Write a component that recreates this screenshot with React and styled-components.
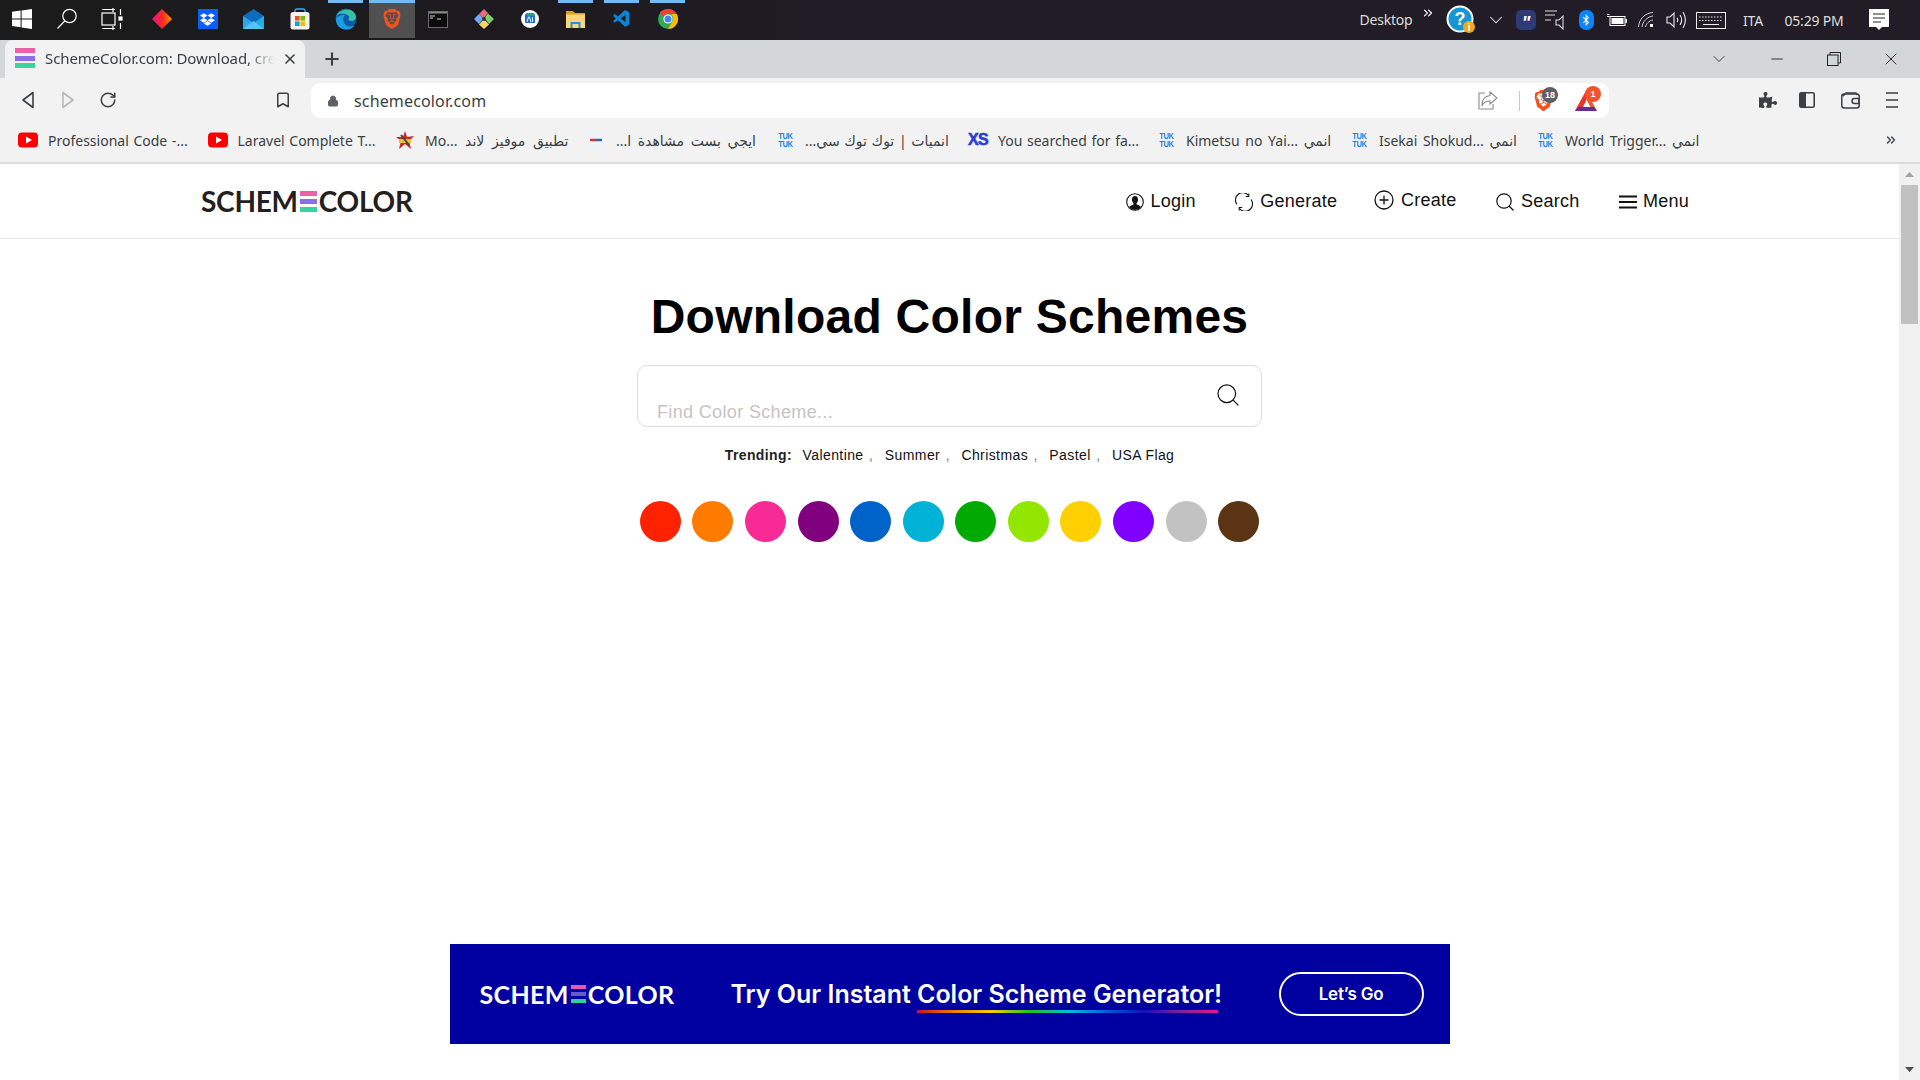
import React from 'react';
import styled, { createGlobalStyle } from 'styled-components';
import { FaDropbox, FaPuzzlePiece, FaBluetoothB } from 'react-icons/fa';
import { SiBrave } from 'react-icons/si';
import { VscVscode } from 'react-icons/vsc';
import { ChevronDown, Minus, X, Plus, Lock, Bookmark as BookmarkIcon, RotateCw, ChevronsRight } from 'lucide-react';

const Global = createGlobalStyle`
  html, body { margin: 0; padding: 0; height: 100%; overflow: hidden; background: #fff; }
  #root { height: 1080px; }
  * { box-sizing: border-box; }
  svg { flex: none; }
`;

const UI = `"Noto Sans", "DejaVu Sans", sans-serif`;
const WEB = `"Liberation Sans", Arial, sans-serif`;

const Screen = styled.div`display: flex; flex-direction: column; width: 1920px; height: 1080px; overflow: hidden;`;

/* Taskbar */
const Taskbar = styled.div`
  height: 40px; flex: none; display: flex; align-items: flex-start;
  background: linear-gradient(90deg, #1b1b1b 0%, #1c1a1e 25%, #211c25 45%, #211c25 100%);
  color: #e8e8e8; font-family: ${UI};
`;
const TaskLeft = styled.div`display: flex; margin-left: -1px;`;
const TaskGroup = styled.div`display: flex; margin-left: 4.5px;`;
const TaskCell = styled.div`
  position: relative; height: 38px; width: ${p => p.$w || 46}px; flex: none;
  display: flex; align-items: center; justify-content: center;
  background: ${p => (p.$active ? '#505050' : 'transparent')};
  &::before {
    content: ''; position: absolute; top: 0; height: 3px;
    left: ${p => (p.$active ? '0' : '5.5px')}; right: ${p => (p.$active ? '0' : '5.5px')};
    background: ${p => (p.$active || p.$run ? '#76b9ed' : 'transparent')};
  }
`;
const Tray = styled.div`display: flex; margin-left: auto; padding-right: 24px; height: 40px; align-items: center;`;
const TrayCell = styled.div`
  width: ${p => p.$w}px; flex: none; display: flex; justify-content: center; align-items: center;
  white-space: nowrap; font-size: 14px; color: #dcdcdc; letter-spacing: -0.2px;
  ${p => (p.$up ? `margin-top: -${p.$up}px;` : '')}
`;

/* Tab strip */
const TabStrip = styled.div`height: 38px; flex: none; display: flex; background: #d3d7da; padding-left: 5px; align-items: stretch;`;
const Tab = styled.div`
  width: 300px; display: flex; align-items: center; background: #f2f2f2; border-radius: 8px 8px 0 0; padding-left: 10px;
`;
const Favicon = styled.div`width: 20px; height: 20px; margin-top: -2px; display: flex; flex-direction: column; justify-content: space-between;`;
const FavBar = styled.i`display: block; height: 5px; background: ${p => p.$c};`;
const TabTitle = styled.div`
  margin: -2px 0 0 10px; width: 230px; overflow: hidden; white-space: nowrap; font: 15px ${UI}; color: #3c4043; letter-spacing: -0.1px;
  -webkit-mask-image: linear-gradient(90deg, #000 88%, transparent 100%);
  mask-image: linear-gradient(90deg, #000 88%, transparent 100%);
`;
const TabClose = styled.div`margin: -1px 0 0 7px; display: flex; color: #3c4043;`;
const NewTab = styled.div`width: 44px; margin-left: 5px; display: flex; align-items: center; justify-content: center; color: #3c4043;`;
const WinControls = styled.div`margin-left: auto; display: flex; align-items: center; padding-right: 1px; color: #222;`;
const WinBtn = styled.div`width: ${p => p.$w}px; display: flex; justify-content: center; align-items: center;`;

/* Toolbar */
const Toolbar = styled.div`height: 40px; flex: none; display: flex; align-items: flex-start; padding: 5px 10px 0 8px; background: #f2f2f2;`;
const ToolCell = styled.div`
  width: ${p => p.$w || 40}px; height: 34px; flex: none; display: flex; align-items: center; justify-content: center;
  margin-left: ${p => p.$ml || 0}px; color: ${p => p.$c || '#3c4043'};
`;
const UrlBar = styled.div`
  width: 1298px; height: 35px; margin-left: 8px; flex: none; display: flex; align-items: center; background: #fff;
  border-radius: 9px; padding: 0 11px 0 16px;
`;
const UrlText = styled.span`margin-left: 15px; font: 16px ${UI}; color: #3c4043; letter-spacing: 0.15px;`;
const UrlRight = styled.div`margin-left: auto; display: flex; align-items: center;`;
const Sep = styled.div`width: 1px; height: 20px; background: #c4c7ca; margin-left: 21px;`;
const ExtIcon = styled.div`position: relative; width: 24px; height: 24px; display: flex; align-items: center; justify-content: center; margin-left: ${p => p.$ml}px;`;
const Badge = styled.span`
  position: absolute; border-radius: 50%; display: flex; align-items: center; justify-content: center;
  width: 16px; height: 16px; top: ${p => p.$t}px; left: ${p => p.$l}px; background: ${p => p.$bg}; color: #fff;
  font: 700 9px ${WEB};
`;
const ToolRight = styled.div`margin-left: auto; display: flex;`;

/* Bookmarks */
const BookmarksBar = styled.div`
  height: 46px; flex: none; display: flex; align-items: center; padding: 0 0 0 20px; background: #f2f2f2; border-bottom: 2px solid #dcdcdc;
`;
const Mark = styled.div`width: ${p => p.$w}px; flex: none; display: flex; align-items: center; gap: 12px;`;
const MarkIcon = styled.div`width: 16px; height: 16px; flex: none; display: flex; align-items: center; justify-content: center;`;
const MarkText = styled.span`font: 14px ${UI}; color: #3c4043; white-space: nowrap; word-spacing: ${p => p.$ws || 1}px;`;
const TukIcon = styled.div`
  width: 16px; flex: none; font: 700 9px/8px ${WEB}; color: #1a7df0; text-align: center; letter-spacing: -0.3px;
  transform: scaleX(0.82);
`;
const XsIcon = styled.div`width: 16px; flex: none; margin-left: -2px; margin-right: 2px; font: 700 16px ${WEB}; color: #2a3fd0; letter-spacing: -0.6px; -webkit-text-stroke: 0.6px #2a3fd0;`;
const MoreMarks = styled.div`margin-left: auto; width: 58px; display: flex; justify-content: center; color: #3c4043;`;

/* Page */
const Viewport = styled.div`flex: 1; display: flex; min-height: 0;`;
const Page = styled.div`flex: 1; min-width: 0; display: flex; flex-direction: column; background: #fff;`;
const Header = styled.header`
  height: 75px; flex: none; border-bottom: 1px solid #e6e6e6; display: flex; align-items: center; justify-content: space-between;
  padding: 0 210px 0 201px; font-family: ${WEB};
`;
const LogoWrap = styled.div`
  display: flex; align-items: center; gap: ${p => p.$gap}px; color: ${p => p.$c};
  font: 700 ${p => p.$fs}px/1 Lato, sans-serif; letter-spacing: ${p => p.$ls}px;
`;
const LogoBars = styled.div`width: ${p => p.$w}px; height: ${p => p.$h}px; display: flex; flex-direction: column; justify-content: space-between;`;
const LogoBar = styled.i`display: block; height: ${p => p.$h}px; background: ${p => p.$c};`;
const Nav = styled.nav`display: flex; gap: 39.5px; align-items: center; margin-top: 1px;`;
const NavItem = styled.a`
  display: flex; align-items: center; gap: ${p => p.$gap || 7}px; font-size: 18px; letter-spacing: 0.25px; color: #111;
  ${p => (p.$raise ? 'margin: -3px 0 0 -3px;' : '')}
`;
const Main = styled.main`display: flex; flex-direction: column; align-items: center; font-family: ${WEB};`;
const Title = styled.h1`margin: 50px 0 0; font: 700 48px/56px ${WEB}; color: #000; letter-spacing: 0.25px;`;
const SearchBox = styled.div`
  margin-top: 20px; width: 625px; height: 62px; border: 1px solid #dedede; border-radius: 10px; display: flex; padding: 0 22px 0 19px; background: #fff;
`;
const SearchInput = styled.input`
  flex: 1; min-width: 0; height: 28px; align-self: flex-end; border: 0; outline: 0; padding: 0; font: 18px ${WEB}; background: transparent;
  letter-spacing: 0.35px;
  &::placeholder { color: #c6c3c3; opacity: 1; }
`;
const SearchIcon = styled.div`margin-top: 18px; width: 22px; height: 22px; flex: none;`;
const Trending = styled.div`margin-top: 18px; height: 20px; display: flex; align-items: center; font-size: 14px; letter-spacing: 0.4px; color: #111; white-space: nowrap;`;
const TrendLabel = styled.b`margin-right: 10.5px; color: #222;`;
const Comma = styled.span`margin: 0 11.5px 0 5.5px; color: #777;`;
const Swatches = styled.div`margin-top: 36px; display: flex; gap: 11.6px;`;
const Swatch = styled.div`width: 41px; height: 41px; border-radius: 50%; background: ${p => p.$c};`;
const Banner = styled.div`
  margin-top: 402px; width: 1000px; height: 100px; flex: none; background: #0000a0; display: flex; align-items: center; padding: 0 26px 0 30px; color: #fff;
`;
const BannerText = styled.div`
  margin-left: 56px; font: 600 25px/1 Inter, sans-serif; white-space: nowrap; letter-spacing: -0.02px;
`;
const Underlined = styled.span`
  position: relative;
  &::after {
    content: ''; position: absolute; left: 0; right: 4px; bottom: -4px; height: 3px;
    background: linear-gradient(90deg, #c8102e, #f08000, #f4d000, #20c020, #00c0e0, #0060e0, #1010c0, #8020a0, #f01090);
  }
`;
const GoButton = styled.div`
  margin-left: auto; width: 145px; height: 44px; border: 2px solid #fff; border-radius: 22px; display: flex; align-items: center; justify-content: center;
  font: 600 17px Inter, sans-serif; letter-spacing: -0.2px;
`;
const Scrollbar = styled.div`width: 21px; flex: none; background: #f1f1f1; display: flex; flex-direction: column; align-items: center; padding: 0 2px;`;
const ScrollBtn = styled.div`height: 21px; flex: none; display: flex; align-items: center; justify-content: center;`;
const Thumb = styled.div`width: 17px; height: 139px; background: #c1c1c1; flex: none;`;
const ScrollSpace = styled.div`flex: 1;`;

const Logo = ({ c, fs, ls, gap, bw, bh, th, colors }) => (
  <LogoWrap $c={c} $fs={fs} $ls={ls} $gap={gap}>
    <span>SCHEM</span>
    <LogoBars $w={bw} $h={bh}>
      {colors.map(col => <LogoBar key={col} $c={col} $h={th} />)}
    </LogoBars>
    <span>COLOR</span>
  </LogoWrap>
);

const WinLogo = () => (
  <svg width="20" height="20" viewBox="0 0 20 20" fill="#fff"><path d="M0 2.8 8.6 1.6V9.4H0ZM9.6 1.5 20 0V9.4H9.6ZM0 10.4H8.6V18.3L0 17.1ZM9.6 10.4H20V20L9.6 18.5Z" /></svg>
);
const MagIcon = () => (
  <svg width="22" height="22" viewBox="0 0 22 22" fill="none" stroke="#fff" strokeWidth="1.2"><circle cx="13.5" cy="8" r="6.7" /><path d="M8.7 13 1.5 20.5" /></svg>
);
const TaskView = () => (
  <svg width="22" height="22" viewBox="0 0 22 22" fill="none" stroke="#fff" strokeWidth="1.2"><path d="M1 1.5H14M1 20.5H14M12 0V4M12 18V22" /><rect x="1" y="5" width="13" height="12" /><path d="M19.5 1V7M19.5 15V21" /><rect x="18" y="9" width="3" height="3" fill="#fff" /></svg>
);
const Diamond = () => (
  <svg width="20" height="20" viewBox="0 0 20 20"><defs><linearGradient id="dg" x1="0" x2="1"><stop offset="0" stopColor="#f0148c" /><stop offset=".55" stopColor="#fa2a1e" /><stop offset="1" stopColor="#ff9b00" /></linearGradient></defs><path d="M10 0 20 10 10 20 0 10Z" fill="url(#dg)" /></svg>
);
const DropboxTile = styled.div`width: 20px; height: 20px; background: #0b5cff; color: #fff; display: flex; align-items: center; justify-content: center;`;
const MailIcon = () => (
  <svg width="21" height="20" viewBox="0 0 21 20"><path d="M0 7 10.5 0 21 7V20H0Z" fill="#0f6cbd" /><path d="M0 7V20H21V7L10.5 14Z" fill="#2aa9e8" /><path d="M0 20 10.5 12 21 20Z" fill="#55c3f2" /></svg>
);
const StoreIcon = () => (
  <svg width="20" height="22" viewBox="0 0 20 22"><path d="M5 5V3a2 2 0 0 1 2-2h6a2 2 0 0 1 2 2v2" fill="none" stroke="#2fb4e8" strokeWidth="1.3" /><rect x="0.5" y="4" width="19" height="17.5" rx="2.5" fill="#f4f2ef" /><rect x="5" y="8" width="4.6" height="4.6" fill="#f25022" /><rect x="10.4" y="8" width="4.6" height="4.6" fill="#7fba00" /><rect x="5" y="13.4" width="4.6" height="4.6" fill="#00a4ef" /><rect x="10.4" y="13.4" width="4.6" height="4.6" fill="#ffb900" /></svg>
);
const EdgeIcon = () => (
  <svg width="22" height="22" viewBox="0 0 22 22"><circle cx="11" cy="11" r="10.5" fill="#0c59a4" /><path d="M1 9C3 2 13-1 18.5 4 22.5 8 21.5 12.5 17 13 12 13.5 13.5 9.5 14.5 9 12 5 4 4 1 9Z" fill="#36c0a8" /><path d="M1 11c0 6 4 10.5 10 10.5 4 0 7-1.5 8.5-4C15 20 9 18 8.5 12.5 8 9 9 8 10 7 5 7 1 9 1 11Z" fill="#1b9de2" /></svg>
);
const TermIcon = () => (
  <svg width="20" height="17" viewBox="0 0 20 17"><rect x="0.5" y="0.5" width="19" height="16" fill="#0b0b0b" stroke="#6a6a6a" /><rect x="1" y="1" width="18" height="1.5" fill="#8a8a8a" /><path d="M2 5h5M2 7h3M9 8h4" stroke="#ccc" strokeWidth="1" /></svg>
);
const GitKraken = () => (
  <svg width="20" height="20" viewBox="0 0 20 20"><path d="M0 10 5 5 9.5 9.5 5 15Z" fill="#6ea8ff" /><path d="M5 5 10 0 14 4 9.5 9.5Z" fill="#e8687c" /><path d="M10.5 9 14 4.5 20 10 15 15Z" fill="#7fd06a" /><path d="M5 15.5 10 10 15 15.5 10 20Z" fill="#f3d66a" /><circle cx="10" cy="10" r="2" fill="#333" /></svg>
);
const AiIcon = () => (
  <svg width="18" height="18" viewBox="0 0 18 18"><circle cx="9" cy="9" r="9" fill="#fff" /><path d="M4 6a3 3 0 0 1 3-3h4a3 3 0 0 1 3 3v7H4Z" fill="#1f6fd0" /><path d="M6 3h5a3 3 0 0 1 3 3H6Z" fill="#2fa36f" /><path d="M6 12 7.5 7h1L10 12M11.5 7v5" stroke="#dff" strokeWidth="1" fill="none" /></svg>
);
const FolderIcon = () => (
  <svg width="19" height="17" viewBox="0 0 19 17"><path d="M0 0H7L9 2H19V4H0Z" fill="#d9a21a" /><rect y="3.5" width="19" height="13.5" fill="#f8d775" /><path d="M4.5 17V11H14.5V17H12.5V13H6.5V17Z" fill="#2a8fe0" /></svg>
);
const ChromeIcon = () => (
  <svg width="20" height="20" viewBox="0 0 20 20"><circle cx="10" cy="10" r="10" fill="#34a853" /><path d="M10 0a10 10 0 0 1 8.7 5H10A5 5 0 0 0 5.5 8L2 3.2A10 10 0 0 1 10 0Z" fill="#ea4335" /><path d="M18.7 5A10 10 0 0 1 10 20l4.3-7.5A5 5 0 0 0 14 6.5L13 5Z" fill="#fbbc05" /><circle cx="10" cy="10" r="4.6" fill="#fff" /><circle cx="10" cy="10" r="3.5" fill="#4285f4" /></svg>
);
const HelpIcon = () => (
  <svg width="30" height="30" viewBox="0 0 30 30"><circle cx="14" cy="14" r="12.5" fill="#1696d6" stroke="#fff" strokeWidth="2" /><text x="14" y="20" textAnchor="middle" fontFamily="Liberation Sans" fontWeight="700" fontSize="18" fill="#fff">?</text><circle cx="23" cy="22" r="6" fill="#efa81f" /><text x="23" y="26" textAnchor="middle" fontFamily="Liberation Sans" fontWeight="700" fontSize="10" fill="#fff">i</text></svg>
);
const QuoteTile = styled.div`width: 20px; height: 20px; border-radius: 5px; background: #2e3a78; color: #fff; display: flex; align-items: center; justify-content: center; font: italic 700 18px/20px ${WEB}; padding-top: 5px;`;
const ActionIcon = () => (
  <svg width="20" height="20" viewBox="0 0 20 20" fill="none" stroke="#ddd" strokeWidth="1.1"><path d="M0 1H12M0 5H10M0 10H6" /><path d="M11 10h3l4-4v13l-4-4h-3Z" /></svg>
);
const BtTile = styled.div`width: 15px; height: 20px; border-radius: 7px; background: #0a84ff; color: #fff; display: flex; align-items: center; justify-content: center;`;
const BatteryIcon = () => (
  <svg width="20" height="14" viewBox="0 0 20 14" fill="none" stroke="#fff"><path d="M0 3.5H2.5M0 1.5H2.5" /><rect x="3" y="3.5" width="15" height="9" /><rect x="4.5" y="5" width="12" height="6" fill="#fff" stroke="none" /><rect x="18.5" y="6" width="1.5" height="4" fill="#fff" stroke="none" /></svg>
);
const WifiIcon = () => (
  <svg width="16" height="16" viewBox="0 0 16 16" fill="none" stroke="#ccc" strokeWidth="1"><path d="M.5 15C1 7 7 1 15 .5M4 15C4.5 9.5 9.5 4.5 15 4M7.5 15C8 12 11 8.5 15 8" /><rect x="12" y="12" width="3" height="3" fill="#fff" stroke="none" /></svg>
);
const VolumeIcon = () => (
  <svg width="20" height="18" viewBox="0 0 20 18" fill="none" stroke="#eee" strokeWidth="1.1"><path d="M1 6H4L8 2V16L4 12H1Z" /><path d="M11 7c1 1 1 3 0 4M14 4c2 3 2 7 0 10M17 1c3 5 3 11 0 16" /></svg>
);
const KeyboardIcon = () => (
  <svg width="30" height="17" viewBox="0 0 30 17" fill="none" stroke="#eee"><rect x="0.5" y="0.5" width="29" height="16" /><path d="M3 5H27M3 8.5H27" strokeDasharray="1.5 1.5" /><path d="M7 12.5H23" /></svg>
);
const NotifIcon = () => (
  <svg width="20" height="22" viewBox="0 0 20 22"><path d="M0 0H20V18H13L10 21 7 18H0Z" fill="#fff" /><path d="M4 5H16M4 9H16M4 13H12" stroke="#222" strokeWidth="1" /></svg>
);
const RestoreIcon = () => (
  <svg width="14" height="14" viewBox="0 0 14 14" fill="none" stroke="#222"><rect x="0.5" y="3" width="10.5" height="10.5" /><path d="M3 3V.5H13.5V11H11" /></svg>
);
const BackIcon = () => (
  <svg width="14" height="18" viewBox="0 0 14 18" fill="none" stroke="#3c4043" strokeWidth="1.6" strokeLinejoin="round"><path d="M12 1.5V16.5L2 9Z" /></svg>
);
const ForwardIcon = () => (
  <svg width="14" height="18" viewBox="0 0 14 18" fill="none" stroke="#b8b8b8" strokeWidth="1.6" strokeLinejoin="round"><path d="M2 1.5V16.5L12 9Z" /></svg>
);
const ShareIcon = () => (
  <svg width="20" height="20" viewBox="0 0 20 20" fill="none" stroke="#8a8a8a" strokeWidth="1.1"><path d="M7 2H1V18H15V13" /><path d="M12 1 19 7 12 13V10C7 10 5 12 4 15 4 9 7 5 12 4.5Z" /></svg>
);
const BatIcon = () => (
  <svg width="24" height="22" viewBox="0 0 24 22"><path d="M12 1 23 21H1Z" fill="#e85a2c" /><path d="M12 9 7 18H17Z" fill="#fff" /><path d="M12 1 1 21H7L12 11Z" fill="#e8362c" /><path d="M1 21H23L20 17H5Z" fill="#662d91" /></svg>
);
const SidebarIcon = () => (
  <svg width="16" height="16" viewBox="0 0 16 16"><rect x="0.8" y="0.8" width="14.4" height="14.4" rx="1.5" fill="none" stroke="#3c4043" strokeWidth="1.6" /><rect x="1" y="1" width="6" height="14" fill="#3c4043" /></svg>
);
const WalletIcon = () => (
  <svg width="19" height="17" viewBox="0 0 19 17" fill="none" stroke="#3c4043" strokeWidth="1.5"><rect x="0.8" y="2" width="17.4" height="14" rx="2.5" /><path d="M2 4 5 1H15L16 3" /><path d="M18 6.5H13.5a2.5 2.5 0 0 0 0 5H18Z" /></svg>
);
const MenuLines = () => (
  <svg width="12" height="16" viewBox="0 0 12 16" stroke="#3c4043" strokeWidth="1.6"><path d="M0 1H12M0 8H12M0 15H12" /></svg>
);
const YtIcon = () => (
  <svg width="20" height="16" viewBox="0 0 20 16"><rect y="0.5" width="20" height="15" rx="4" fill="#f00" /><path d="M8 4.5 14 8 8 11.5Z" fill="#fff" /></svg>
);
const StarIcon = () => (
  <svg width="18" height="18" viewBox="0 0 18 18"><path d="M9 0 11 6 18 5 13 10 15 18 9 13 3 18 5 10 0 6 7 6Z" fill="#c22" /><path d="M3 8H15V12H3Z" fill="#e8c040" /><path d="M5 4 13 14" stroke="#444" strokeWidth="2" /></svg>
);
const EgyIcon = () => (
  <svg width="16" height="16" viewBox="0 0 16 16"><rect width="16" height="16" fill="#eef3f7" /><path d="M2 8H8" stroke="#d33" strokeWidth="2.5" /><path d="M8 8H14" stroke="#36a" strokeWidth="2.5" /></svg>
);

const NavUser = () => (
  <svg width="18" height="18" viewBox="0 0 18 18"><circle cx="9" cy="9" r="8.3" fill="#fff" stroke="#111" strokeWidth="1.1" /><path d="M9 3c2.3 0 3.2 1.8 3 4-.1 1.5-.8 2.7-1.5 3.3v1c1 .7 3.5 1.3 4.5 2.6A8 8 0 0 1 9 17a8 8 0 0 1-6-3c1-1.3 3.5-1.9 4.5-2.600v-1C6.800 9.700 6.100 8.500 6 7c-.2-2.200.7-4 3-4Z" fill="#111" /></svg>
);
const NavGen = () => (
  <svg width="18" height="18" viewBox="0 0 18 18" fill="none" stroke="#111" strokeWidth="1.1"><path d="M2 11.5A7.3 7.3 0 0 1 13.5 2.5" /><path d="M13.8.5V3.5H10.8" /><path d="M16 6.5A7.3 7.3 0 0 1 4.5 15.5" /><path d="M4.2 17.5V14.5H7.2" /></svg>
);
const NavPlus = () => (
  <svg width="20" height="20" viewBox="0 0 20 20" fill="none" stroke="#111" strokeWidth="1.3"><circle cx="10" cy="10" r="9" /><path d="M10 5.5V14.5M5.5 10H14.5" /></svg>
);
const NavSearch = ({ s = 18 }) => (
  <svg width={s} height={s} viewBox="0 0 18 18" fill="none" stroke="#111" strokeWidth={s > 18 ? 1 : 1.2}><circle cx="8" cy="8" r="7.2" /><path d="M13 13 17.5 17.5" /></svg>
);
const NavBars = () => (
  <svg width="18" height="14" viewBox="0 0 18 14" stroke="#111" strokeWidth="2"><path d="M0 1.5H18M0 7H18M0 12.5H18" /></svg>
);
const UpArrow = () => <svg width="9" height="5" viewBox="0 0 9 5"><path d="M4.5 0 9 5H0Z" fill="#a3a3a3" /></svg>;
const DownArrow = () => <svg width="9" height="5" viewBox="0 0 9 5"><path d="M0 0H9L4.5 5Z" fill="#505050" /></svg>;

const swatches = ['#ff2200', '#ff7b00', '#f82a96', '#800080', '#0063c9', '#00b2d6', '#00aa00', '#93e600', '#ffd000', '#8000ff', '#c2c2c2', '#5b3414'];
const trending = ['Valentine', 'Summer', 'Christmas', 'Pastel', 'USA Flag'];
const logoColors = ['#ee5fa7', '#8a6fe8', '#39d3a0'];

const marks = [
  { w: 189.5, icon: <YtIcon />, text: 'Professional Code -...' },
  { w: 187.5, icon: <YtIcon />, text: 'Laravel Complete T...' },
  { w: 191, icon: <StarIcon />, text: 'Mo... تطبيق موفيز لاند', ws: 4 },
  { w: 189, icon: <EgyIcon />, text: 'ايجي بست مشاهدة ا...', rtl: true, ws: 3 },
  { w: 193, tuk: true, text: 'انميات | توك توك سي...', rtl: true },
  { w: 188, xs: true, text: 'You searched for fa...' },
  { w: 193, tuk: true, text: 'Kimetsu no Yai... انمي', ws: 2 },
  { w: 186, tuk: true, text: 'Isekai Shokud... انمي', ws: 2 },
  { w: 190, tuk: true, text: 'World Trigger... انمي', ws: 2 },
];

export default function App() {
  return (
    <Screen>
      <Global />
      <Taskbar>
        <TaskLeft>
          <TaskCell $w={45}><WinLogo /></TaskCell>
          <TaskCell $w={45}><MagIcon /></TaskCell>
          <TaskCell $w={45}><TaskView /></TaskCell>
        </TaskLeft>
        <TaskGroup>
          <TaskCell><Diamond /></TaskCell>
          <TaskCell><DropboxTile><FaDropbox size={15} /></DropboxTile></TaskCell>
          <TaskCell><MailIcon /></TaskCell>
          <TaskCell><StoreIcon /></TaskCell>
          <TaskCell $run><EdgeIcon /></TaskCell>
          <TaskCell $active><SiBrave size={20} color="#f4511e" /></TaskCell>
          <TaskCell><TermIcon /></TaskCell>
          <TaskCell><GitKraken /></TaskCell>
          <TaskCell><AiIcon /></TaskCell>
          <TaskCell $run><FolderIcon /></TaskCell>
          <TaskCell $run><VscVscode size={20} color="#0a84d6" /></TaskCell>
          <TaskCell $run><ChromeIcon /></TaskCell>
        </TaskGroup>
        <Tray>
          <TrayCell $w={76} $up={2}>Desktop</TrayCell>
          <TrayCell $w={8} $up={14}><ChevronsRight size={14} color="#fff" /></TrayCell>
          <TrayCell $w={58}><HelpIcon /></TrayCell>
          <TrayCell $w={12}><ChevronDown size={22} strokeWidth={1.1} color="#eee" /></TrayCell>
          <TrayCell $w={48}><QuoteTile>"</QuoteTile></TrayCell>
          <TrayCell $w={10}><ActionIcon /></TrayCell>
          <TrayCell $w={52}><BtTile><FaBluetoothB size={12} /></BtTile></TrayCell>
          <TrayCell $w={10}><BatteryIcon /></TrayCell>
          <TrayCell $w={48}><WifiIcon /></TrayCell>
          <TrayCell $w={12}><VolumeIcon /></TrayCell>
          <TrayCell $w={58}><KeyboardIcon /></TrayCell>
          <TrayCell $w={26}>ITA</TrayCell>
          <TrayCell $w={96}>05:29 PM</TrayCell>
          <TrayCell $w={34}><NotifIcon /></TrayCell>
        </Tray>
      </Taskbar>

      <TabStrip>
        <Tab>
          <Favicon>{logoColors.map(c => <FavBar key={c} $c={c} />)}</Favicon>
          <TabTitle>SchemeColor.com: Download, create</TabTitle>
          <TabClose><X size={16} strokeWidth={2.4} /></TabClose>
        </Tab>
        <NewTab><Plus size={20} strokeWidth={2.5} /></NewTab>
        <WinControls>
          <WinBtn $w={58}><ChevronDown size={20} strokeWidth={1} /></WinBtn>
          <WinBtn $w={57}><Minus size={18} strokeWidth={1.2} /></WinBtn>
          <WinBtn $w={57}><RestoreIcon /></WinBtn>
          <WinBtn $w={57}><X size={20} strokeWidth={1.1} /></WinBtn>
        </WinControls>
      </TabStrip>

      <Toolbar>
        <ToolCell><BackIcon /></ToolCell>
        <ToolCell><ForwardIcon /></ToolCell>
        <ToolCell><RotateCw size={18} strokeWidth={2} /></ToolCell>
        <ToolCell $ml={135}><BookmarkIcon size={18} strokeWidth={2} /></ToolCell>
        <UrlBar>
          <Lock size={12} fill="#5f6368" color="#5f6368" strokeWidth={2} />
          <UrlText>schemecolor.com</UrlText>
          <UrlRight>
            <ShareIcon />
            <Sep />
            <ExtIcon $ml={11}>
              <SiBrave size={21} color="#f4511e" />
              <Badge $t={-2} $l={11} $bg="#5c5f66">18</Badge>
            </ExtIcon>
            <ExtIcon $ml={19}>
              <BatIcon />
              <Badge $t={-3} $l={11} $bg="#f4512c">1</Badge>
            </ExtIcon>
          </UrlRight>
        </UrlBar>
        <ToolRight>
          <ToolCell><FaPuzzlePiece size={18} /></ToolCell>
          <ToolCell $w={38}><SidebarIcon /></ToolCell>
          <ToolCell $w={48}><WalletIcon /></ToolCell>
          <ToolCell $w={36}><MenuLines /></ToolCell>
        </ToolRight>
      </Toolbar>

      <BookmarksBar>
        {marks.map(m => (
          <Mark key={m.text} $w={m.w}>
            {m.tuk ? <TukIcon>TUK<br />TUK</TukIcon> : m.xs ? <XsIcon>XS</XsIcon> : <MarkIcon>{m.icon}</MarkIcon>}
            <MarkText $ws={m.ws} dir={m.rtl ? 'rtl' : undefined}>{m.text}</MarkText>
          </Mark>
        ))}
        <MoreMarks><ChevronsRight size={14} strokeWidth={2.4} /></MoreMarks>
      </BookmarksBar>

      <Viewport>
        <Page>
          <Header>
            <Logo c="#231f20" fs={28} ls={-0.25} gap={2} bw={17} bh={21} th={5} colors={logoColors} />
            <Nav>
              <NavItem><NavUser />Login</NavItem>
              <NavItem><NavGen />Generate</NavItem>
              <NavItem $raise><NavPlus />Create</NavItem>
              <NavItem><NavSearch />Search</NavItem>
              <NavItem $gap={6}><NavBars />Menu</NavItem>
            </Nav>
          </Header>
          <Main>
            <Title>Download Color Schemes</Title>
            <SearchBox>
              <SearchInput placeholder="Find Color Scheme..." readOnly />
              <SearchIcon><NavSearch s={22} /></SearchIcon>
            </SearchBox>
            <Trending>
              <TrendLabel>Trending:</TrendLabel>
              {trending.map((t, i) => (
                <React.Fragment key={t}>
                  <span>{t}</span>
                  {i < trending.length - 1 && <Comma>,</Comma>}
                </React.Fragment>
              ))}
            </Trending>
            <Swatches>{swatches.map(c => <Swatch key={c} $c={c} />)}</Swatches>
            <Banner>
              <Logo c="#fff" fs={25} ls={0.35} gap={2} bw={15} bh={18} th={4} colors={['#e85aa8', '#6a5ad0', '#2fd09a']} />
              <BannerText>Try Our Instant <Underlined>Color Scheme Generator!</Underlined></BannerText>
              <GoButton>Let’s Go</GoButton>
            </Banner>
          </Main>
        </Page>
        <Scrollbar>
          <ScrollBtn><UpArrow /></ScrollBtn>
          <Thumb />
          <ScrollSpace />
          <ScrollBtn><DownArrow /></ScrollBtn>
        </Scrollbar>
      </Viewport>
    </Screen>
  );
}
